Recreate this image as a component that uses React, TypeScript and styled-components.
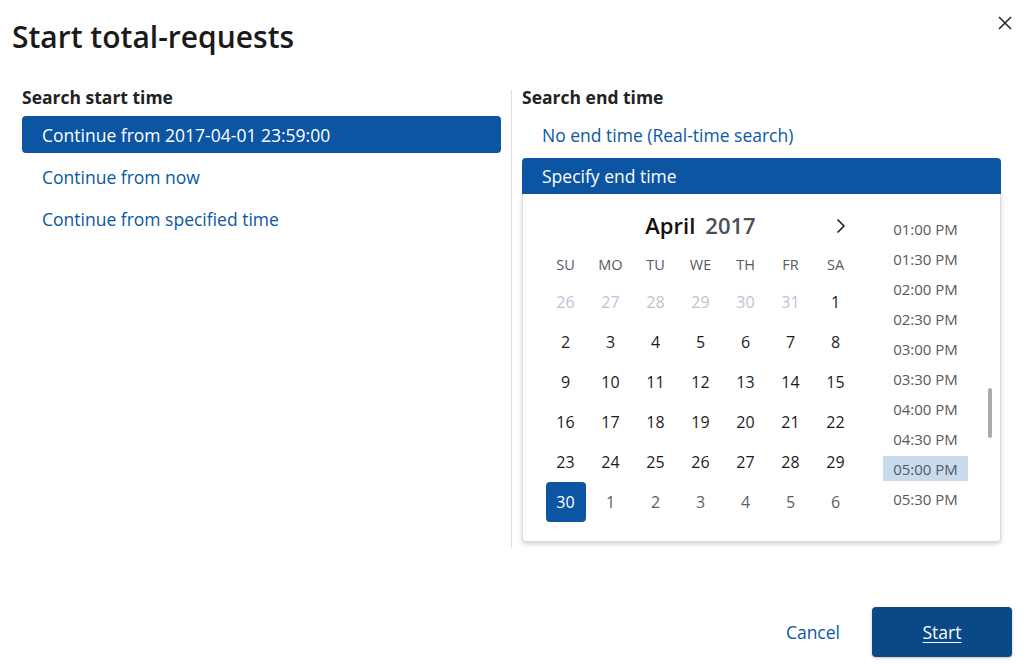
import React from "react";
import styled, { createGlobalStyle } from "styled-components";

const Global = createGlobalStyle`
  html, body { margin: 0; padding: 0; background: #fff; }
  body { font-family: "Open Sans", "Noto Sans", sans-serif; color: #1f1f1f; }
  * { box-sizing: border-box; }
`;

const BLUE = "#0b55a3";
const LINK = "#0b57a4";

const Page = styled.div`
  width: 1024px;
  height: 664px;
  display: flex;
  flex-direction: column;
  background: #fff;
  overflow: hidden;
`;

const TitleBar = styled.div`
  display: flex;
  justify-content: space-between;
  align-items: flex-start;
  padding: 17px 10px 0 12px;
`;

const Title = styled.h1`
  margin: 0;
  font-size: 30px;
  line-height: 40px;
  font-weight: 600;
  color: #1a1a1a;
`;

const CloseButton = styled.button`
  border: 0;
  background: none;
  padding: 0;
  margin-top: -3px;
  width: 18px;
  height: 18px;
  display: flex;
  align-items: center;
  justify-content: center;
  cursor: pointer;
`;

const Columns = styled.div`
  display: grid;
  grid-template-columns: 479px 1px 479px;
  column-gap: 10px;
  padding: 27px 22px 0 22px;
  align-items: start;
`;

const Column = styled.div`
  display: flex;
  flex-direction: column;
`;

const Divider = styled.div`
  margin-top: 6px;
  height: 458px;
  background: #d9dde3;
`;

const Heading = styled.h2`
  margin: 0 0 6px 0;
  font-size: 17.5px;
  line-height: 26px;
  font-weight: 700;
  color: #222;
`;

const Options = styled.div`
  display: flex;
  flex-direction: column;
  gap: 5px;
`;

const Option = styled.div<{ $selected?: boolean; $attached?: boolean }>`
  height: ${(p) => (p.$attached ? "36px" : "37px")};
  display: flex;
  align-items: center;
  padding-left: 20px;
  font-size: 17.5px;
  color: ${(p) => (p.$selected ? "#fff" : LINK)};
  background: ${(p) => (p.$selected ? BLUE : "transparent")};
  border-radius: ${(p) => (p.$attached ? "4px 4px 0 0" : "4px")};
  cursor: pointer;
`;

const Panel = styled.div`
  display: flex;
  border: 1px solid #d8dde5;
  border-top: 0;
  border-radius: 0 0 4px 4px;
  box-shadow: 0 2px 4px rgba(40, 50, 70, 0.22);
  padding: 14px 0 19px 20px;
  height: 348px;
`;

const Calendar = styled.div`
  width: 315px;
  display: flex;
  flex-direction: column;
`;

const CalHeader = styled.div`
  position: relative;
  height: 36px;
  display: flex;
  align-items: center;
  justify-content: center;
  gap: 10px;
  margin-bottom: 12px;
`;

const Month = styled.span`
  font-size: 22px;
  font-weight: 600;
  color: #111;
  line-height: 30px;
  margin-top: -1px;
`;

const Year = styled.span`
  font-size: 22px;
  font-weight: 600;
  color: #4a4f57;
  line-height: 30px;
  margin-top: -1px;
`;

const NextButton = styled.button`
  position: absolute;
  right: 9px;
  top: 9px;
  border: 0;
  background: none;
  padding: 0;
  width: 16px;
  height: 18px;
  display: flex;
  align-items: center;
  justify-content: center;
  cursor: pointer;
`;

const Grid = styled.div`
  display: grid;
  grid-template-columns: repeat(7, 45px);
`;

const DayName = styled.div`
  height: 20px;
  margin-bottom: 8px;
  display: flex;
  align-items: center;
  justify-content: center;
  font-size: 14.5px;
  color: #555a61;
`;

const DayCell = styled.div`
  height: 40px;
  display: flex;
  align-items: center;
  justify-content: center;
`;

const Day = styled.div<{ $kind: "prev" | "cur" | "next"; $selected?: boolean }>`
  width: 40px;
  height: 40px;
  border-radius: 4px;
  display: flex;
  align-items: center;
  justify-content: center;
  font-size: 16px;
  color: ${(p) =>
    p.$selected ? "#fff" : p.$kind === "prev" ? "#b9c4d4" : p.$kind === "next" ? "#5a5f66" : "#1c1c1c"};
  background: ${(p) => (p.$selected ? BLUE : "transparent")};
  cursor: pointer;
`;

const TimeArea = styled.div`
  position: relative;
  flex: 1;
  padding: 8px 0 0 25px;
`;

const TimeList = styled.div`
  display: flex;
  flex-direction: column;
  gap: 5px;
  width: 85px;
`;

const TimeItem = styled.div<{ $active?: boolean }>`
  height: 25px;
  display: flex;
  align-items: center;
  justify-content: center;
  font-size: 15px;
  color: #555a61;
  background: ${(p) => (p.$active ? "#c8dbee" : "transparent")};
  cursor: pointer;
`;

const ScrollThumb = styled.div`
  position: absolute;
  right: 8px;
  top: 180px;
  width: 4px;
  height: 50px;
  border-radius: 2px;
  background: #a8abb0;
`;

const Footer = styled.div`
  margin-top: auto;
  display: flex;
  justify-content: flex-end;
  align-items: center;
  gap: 27px;
  padding: 0 12px 7px 0;
`;

const CancelButton = styled.button`
  border: 0;
  background: none;
  padding: 0 5px;
  font-family: inherit;
  font-size: 17.5px;
  color: ${LINK};
  cursor: pointer;
`;

const StartButton = styled.button`
  width: 140px;
  height: 50px;
  border: 0;
  border-radius: 4px;
  background: #0a4886;
  color: #fff;
  font-family: inherit;
  font-size: 17.5px;
  text-decoration: underline;
  text-underline-offset: 3px;
  box-shadow: 0 1px 3px rgba(0, 0, 0, 0.25);
  cursor: pointer;
`;

const dayNames = ["SU", "MO", "TU", "WE", "TH", "FR", "SA"];

type Cell = { n: number; kind: "prev" | "cur" | "next" };
const cells: Cell[] = [
  ...[26, 27, 28, 29, 30, 31].map((n) => ({ n, kind: "prev" as const })),
  ...Array.from({ length: 30 }, (_, i) => ({ n: i + 1, kind: "cur" as const })),
  ...[1, 2, 3, 4, 5, 6].map((n) => ({ n, kind: "next" as const })),
];

const times = [
  "01:00 PM",
  "01:30 PM",
  "02:00 PM",
  "02:30 PM",
  "03:00 PM",
  "03:30 PM",
  "04:00 PM",
  "04:30 PM",
  "05:00 PM",
  "05:30 PM",
];

export default function App() {
  return (
    <Page>
      <Global />
      <TitleBar>
        <Title>Start total-requests</Title>
        <CloseButton aria-label="Close">
          <svg width="14" height="14" viewBox="0 0 14 14">
            <path d="M1 1 L13 13 M13 1 L1 13" stroke="#2a2a2a" strokeWidth="1.6" fill="none" />
          </svg>
        </CloseButton>
      </TitleBar>
      <Columns>
        <Column>
          <Heading>Search start time</Heading>
          <Options>
            <Option $selected>Continue from 2017-04-01 23:59:00</Option>
            <Option>Continue from now</Option>
            <Option>Continue from specified time</Option>
          </Options>
        </Column>
        <Divider />
        <Column>
          <Heading>Search end time</Heading>
          <Options>
            <Option>No end time (Real-time search)</Option>
            <div>
              <Option $selected $attached>
                Specify end time
              </Option>
              <Panel>
                <Calendar>
                  <CalHeader>
                    <Month>April</Month>
                    <Year>2017</Year>
                    <NextButton aria-label="Next month">
                      <svg width="10" height="16" viewBox="0 0 10 16">
                        <path d="M1.5 1.5 L8 8 L1.5 14.5" stroke="#1a1a1a" strokeWidth="1.5" fill="none" />
                      </svg>
                    </NextButton>
                  </CalHeader>
                  <Grid>
                    {dayNames.map((d) => (
                      <DayName key={d}>{d}</DayName>
                    ))}
                    {cells.map((c, i) => (
                      <DayCell key={i}>
                        <Day $kind={c.kind} $selected={c.kind === "cur" && c.n === 30}>
                          {c.n}
                        </Day>
                      </DayCell>
                    ))}
                  </Grid>
                </Calendar>
                <TimeArea>
                  <TimeList>
                    {times.map((t) => (
                      <TimeItem key={t} $active={t === "05:00 PM"}>
                        {t}
                      </TimeItem>
                    ))}
                  </TimeList>
                  <ScrollThumb />
                </TimeArea>
              </Panel>
            </div>
          </Options>
        </Column>
      </Columns>
      <Footer>
        <CancelButton>Cancel</CancelButton>
        <StartButton>Start</StartButton>
      </Footer>
    </Page>
  );
}
